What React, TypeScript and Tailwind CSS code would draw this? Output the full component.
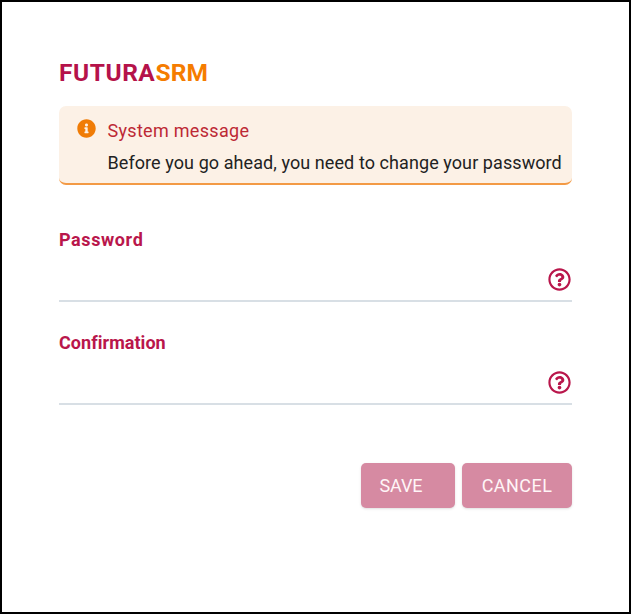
import { FaInfoCircle, FaRegQuestionCircle } from "react-icons/fa";

function Field({ label, labelClass }: { label: string; labelClass: string }) {
  return (
    <div>
      <label className={`block h-[21px] text-[18px] leading-[21px] font-bold text-[#b9164b] ${labelClass}`}>
        {label}
      </label>
      <div className="flex h-[52px] items-center justify-end border-b-2 border-[#d8dfe5] pt-[8px] pr-[1px]">
        <FaRegQuestionCircle className="size-[23px] text-[#b9164b]" />
      </div>
    </div>
  );
}

export default function App() {
  return (
    <main className="h-[614px] w-[631px] border-2 border-black bg-white px-[57px] pt-[57px] font-['Roboto',sans-serif]">
      <h1 className="h-[47px] text-[24.5px] leading-[28px] font-bold tracking-[0.55px] text-[#b5124a]">
        FUTURA<span className="tracking-[0.2px] text-[#f57c00]">SRM</span>
      </h1>
      <section className="flex h-[79px] w-[513px] rounded-[7px] border-b-2 border-[#f39a45] bg-[#fcf1e6] pt-[13px] pl-[18px]">
        <FaInfoCircle className="mr-[11.5px] size-[19px] shrink-0 text-[#f07c06]" />
        <div className="pt-px text-[18px] whitespace-nowrap">
          <p className="h-[32px] leading-[22px] tracking-[0.3px] text-[#bd2935]">System message</p>
          <p className="leading-[22px] tracking-[0.08px] text-[#222]">Before you go ahead, you need to change your password</p>
        </div>
      </section>
      <div className="flex w-[513px] flex-col gap-[30px] pt-[44px]">
        <Field label="Password" labelClass="tracking-[0.6px]" />
        <Field label="Confirmation" labelClass="tracking-[0.05px]" />
      </div>
      <div className="flex w-[513px] justify-end gap-[7px] pt-[58px] text-[18px] text-[#fff5f7]">
        <button className="h-[45px] w-[94px] rounded-[5px] bg-[#d68aa2] pr-[14px] tracking-[-0.1px] shadow">SAVE</button>
        <button className="h-[45px] w-[110px] rounded-[5px] bg-[#d68aa2] tracking-[0.45px] shadow">CANCEL</button>
      </div>
    </main>
  );
}
